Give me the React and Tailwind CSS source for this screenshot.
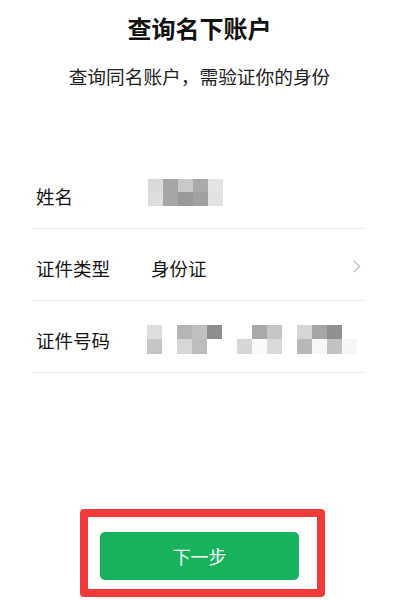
import React from 'react';

const nameCells = [
  ['bg-[#d9d9d9]', 'bg-[#a6a6a6]', 'bg-[#c9c9c9]', 'bg-[#a9a9a9]', 'bg-[#e4e4e4]'],
  ['bg-[#dedede]', 'bg-[#a6a6a6]', 'bg-[#999999]', 'bg-[#a0a0a0]', 'bg-[#e2e2e2]'],
];

const idCells = [
  ['bg-[#dedede]', 'bg-white', 'bg-[#b5b5b5]', 'bg-[#c0c0c0]', 'bg-[#8e8e8e]', 'bg-white', 'bg-white', 'bg-[#a9a9a9]', 'bg-[#c6c6c6]', 'bg-white', 'bg-[#d6d6d6]', 'bg-[#a6a6a6]', 'bg-[#8f8f8f]', 'bg-white'],
  ['bg-[#c6c6c6]', 'bg-white', 'bg-[#d7d7d7]', 'bg-[#bdbdbd]', 'bg-white', 'bg-white', 'bg-[#d6d6d6]', 'bg-[#fafafa]', 'bg-[#dadada]', 'bg-white', 'bg-[#b8b8b8]', 'bg-[#f7f7f7]', 'bg-[#c2c2c2]', 'bg-[#f6f6f6]'],
];

// mosaic used to blur out personal info
function Mosaic({ cells, rowClasses }) {
  return (
    <div className="flex flex-col">
      {cells.map((row, i) => (
        <div key={i} className={`flex ${rowClasses[i]}`}>
          {row.map((c, j) => (
            <div key={j} className={`w-[15px] h-full ${c}`}></div>
          ))}
        </div>
      ))}
    </div>
  );
}

function Row({ label, children, textOffset = 'mt-[7px]' }) {
  return (
    <div className="h-[72px] flex items-center border-b border-[#e6e6e6]">
      <span className={`w-[114px] pl-[3px] text-[18.5px] leading-[20px] text-[#151515] ${textOffset}`}>{label}</span>
      <div className="flex-1 flex items-center">{children}</div>
    </div>
  );
}

export default function App() {
  return (
    <div
      className="w-[399px] h-[600px] bg-white overflow-hidden flex flex-col"
      style={{ fontFamily: '"Noto Sans CJK SC", "Noto Sans", sans-serif' }}
    >
      <h1 className="mt-[15px] text-center text-[24px] leading-[26px] font-bold text-[#111]">查询名下账户</h1>
      <p className="mt-[25px] text-center text-[18.7px] leading-[20px] text-[#222]">查询同名账户，需验证你的身份</p>

      <div className="mt-[71px] ml-[33px] w-[330px]">
        <Row label="姓名">
          <div className="ml-[1px] mb-[1px]">
            <Mosaic cells={nameCells} rowClasses={['h-[13px]', 'h-[14px]']} />
          </div>
        </Row>
        <Row label="证件类型">
          <span className="pl-[4px] mt-[7px] text-[18.5px] leading-[20px] text-[#151515]">身份证</span>
          <svg className="ml-auto mr-[2px] mt-[4px]" width="8" height="13" viewBox="0 0 8 13" fill="none">
            <path d="M1.2 1.2L6.5 6.5L1.2 11.8" stroke="#c4c4c4" strokeWidth="1.4" strokeLinecap="round" strokeLinejoin="round" />
          </svg>
        </Row>
        <Row label="证件号码">
          <div className="mt-[6px]">
            <Mosaic cells={idCells} rowClasses={['h-[14px]', 'h-[15px]']} />
          </div>
        </Row>
      </div>

      <div className="mt-[136px] ml-[80px] w-[245px] border-[8px] border-[#f23a3a] rounded-[4px] pl-[12px] pt-[15px] pb-[9px]">
        <button className="w-[199px] h-[48px] rounded-[5px] bg-[#17b25b] text-white text-[18px] leading-[20px] flex items-center justify-center">
          下一步
        </button>
      </div>
    </div>
  );
}
